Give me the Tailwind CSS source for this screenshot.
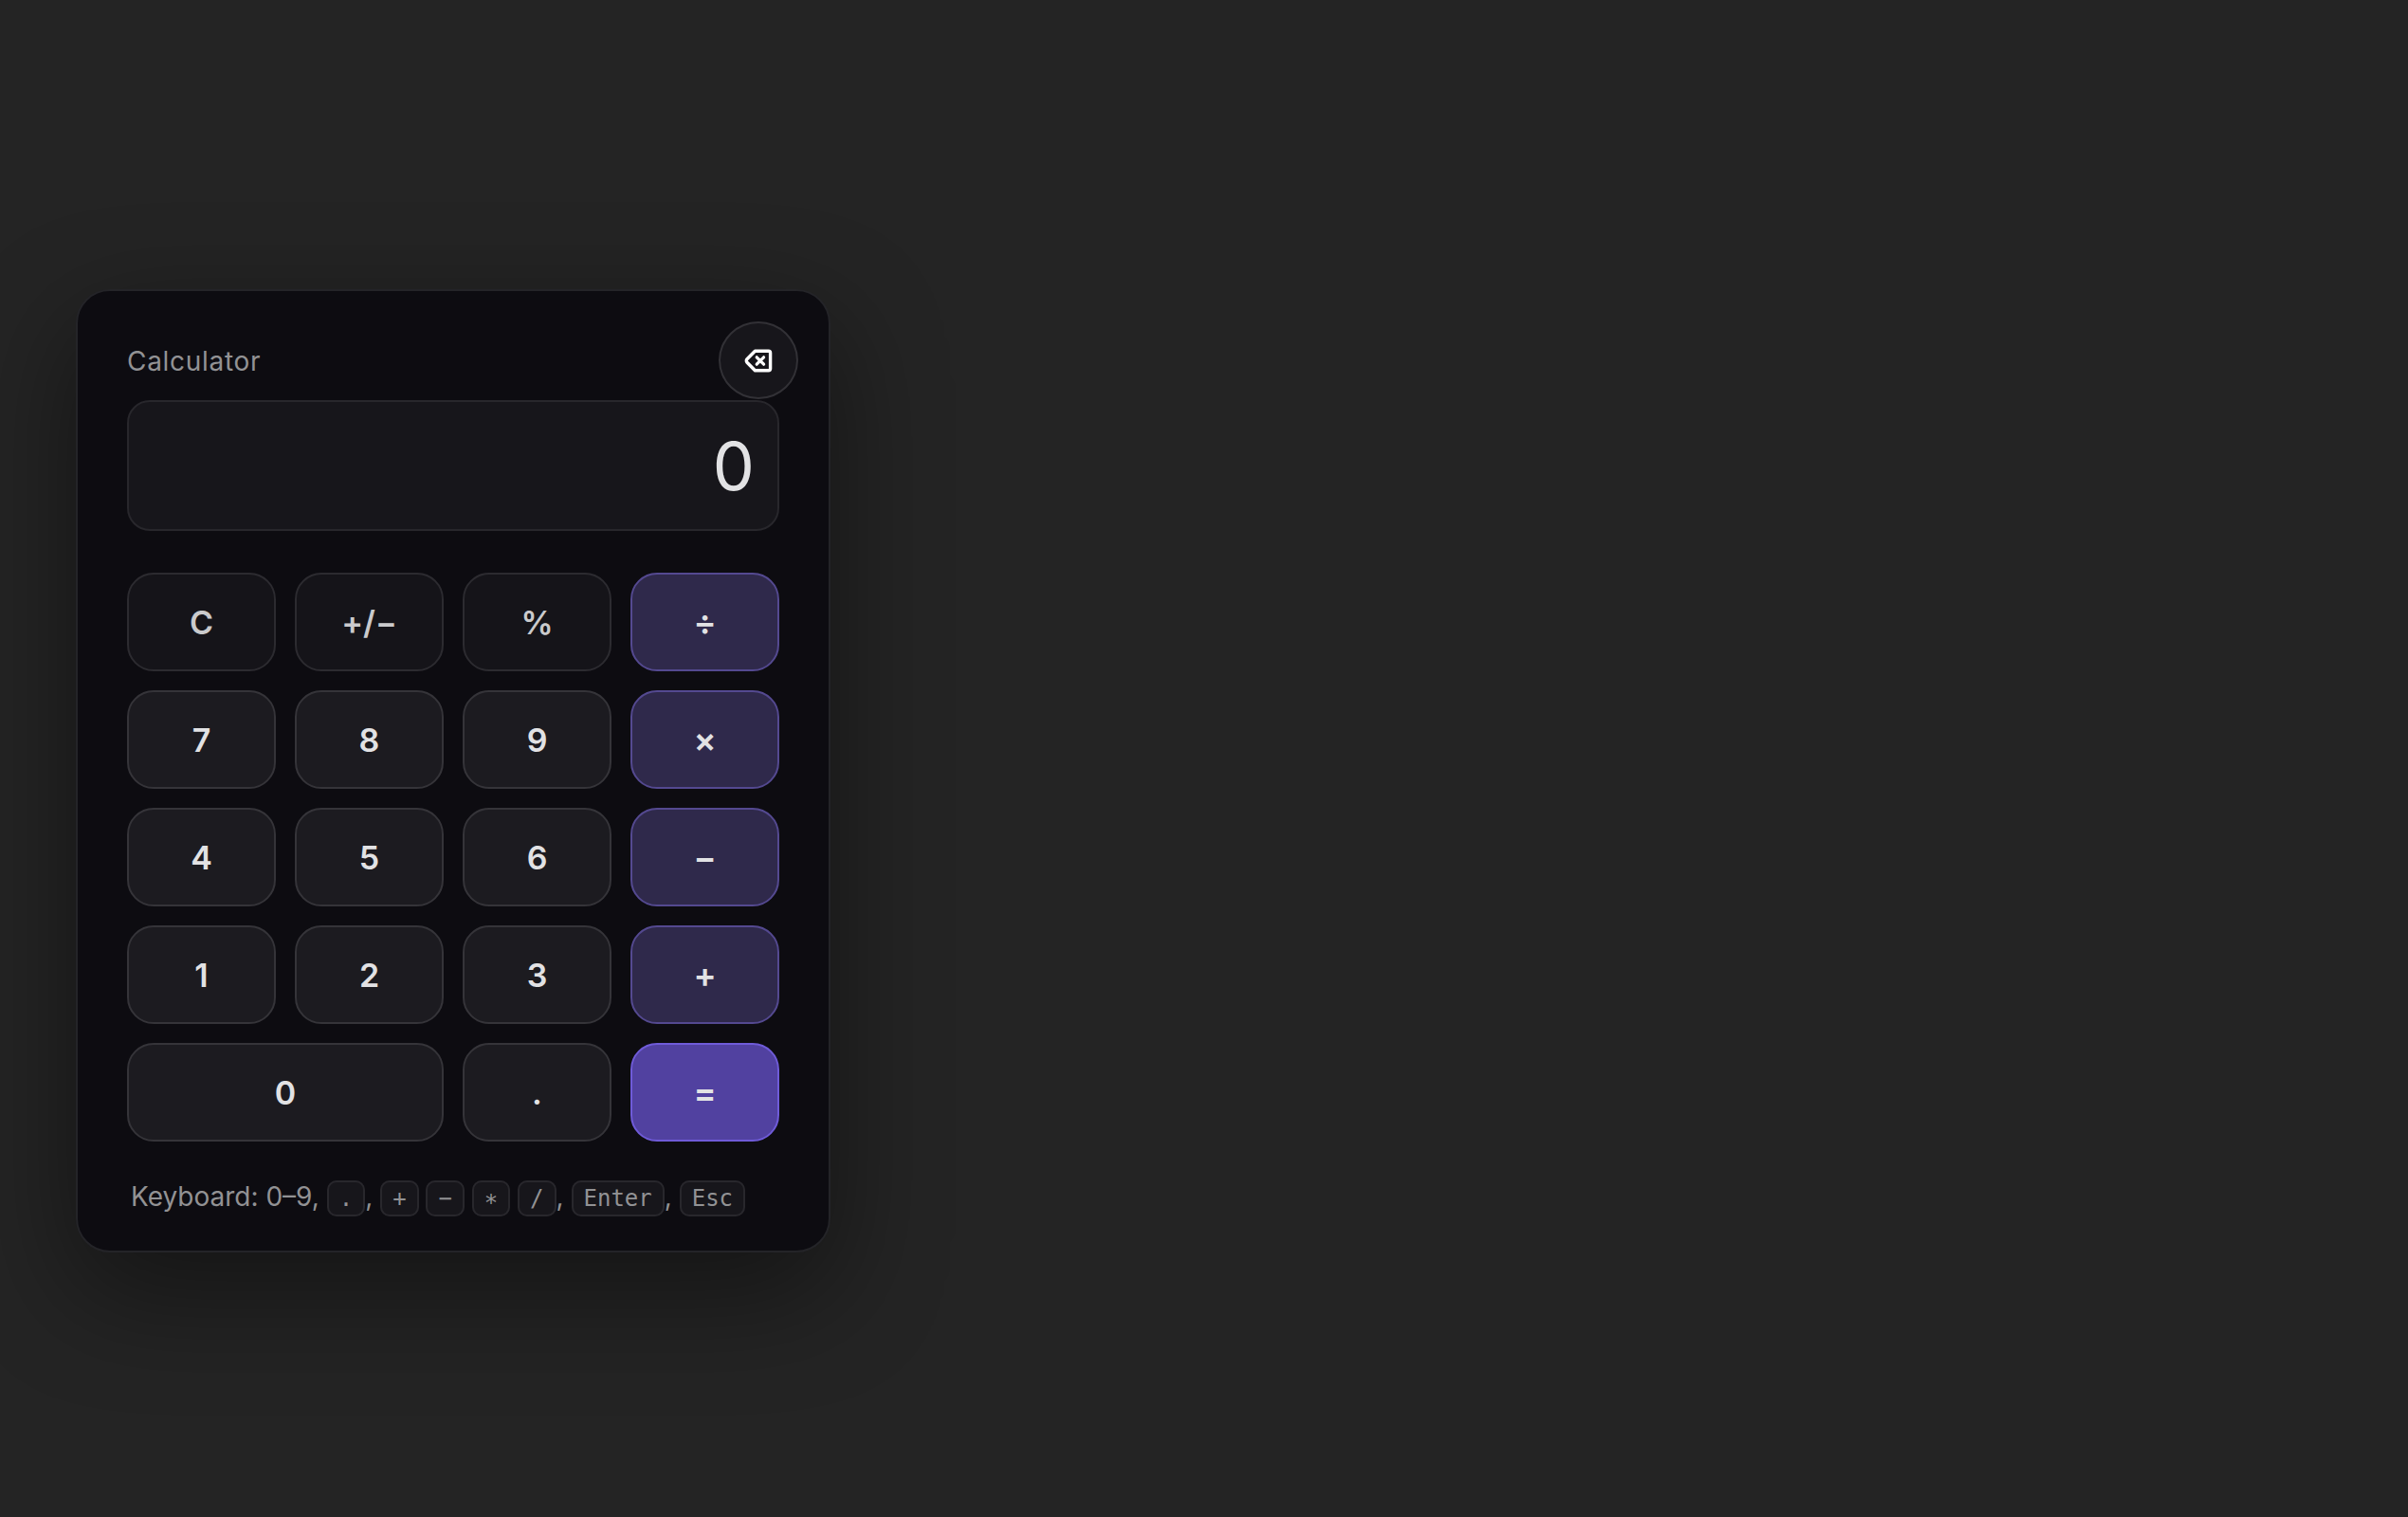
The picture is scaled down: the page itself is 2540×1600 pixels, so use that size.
<!DOCTYPE html>
<html lang="en">
<head>
    <meta charset="UTF-8">
    <meta name="viewport" content="width=device-width, initial-scale=1.0">
    <title>Calculator</title>
    <script src="https://cdn.jsdelivr.net/npm/@tailwindcss/browser@4"></script>
</head>
<body class="min-h-screen flex items-center bg-[#242424] px-20 pt-[26px] font-['Inter',sans-serif] text-[#e2e2e4]">
    <main class="relative w-full max-w-[796px] rounded-[36px] border-2 border-[#242428] bg-[#0d0c11] px-[52px] pt-[52px] pb-[34px] shadow-[0_40px_120px_rgba(0,0,0,0.45)]">
        <header>
            <h1 class="text-[28px] leading-[44px] tracking-wide text-[#929294]">Calculator</h1>
            <button type="button" aria-label="Backspace" class="absolute top-8 right-8 flex h-[82px] w-[84px] items-center justify-center rounded-[50%] border-2 border-[#323136] bg-[#17161b] text-white">
                <svg class="h-8 w-8" viewBox="0 0 32 32" fill="none" stroke="currentColor" stroke-linecap="round" stroke-linejoin="round">
                    <path stroke-width="3.4" d="M12.4 6.2h14.2a2 2 0 0 1 2 2v16.6a2 2 0 0 1-2 2H12.4L4 18.2a2.4 2.4 0 0 1 0-3.4z" />
                    <path stroke-width="3.2" d="m14.2 12.8 7.4 7.4m0-7.4-7.4 7.4" />
                </svg>
            </button>
        </header>

        <output class="mt-[19px] flex h-[138px] items-center justify-end rounded-3xl border-2 border-[#28272c] bg-[#17161b] px-6 pt-[2px] text-[70px] leading-none" aria-live="polite">0</output>

        <div class="mt-11 grid grid-cols-4 gap-5 text-[34px] font-semibold">
            <button type="button" class="h-[104px] rounded-[28px] border-2 border-[#2c2b30] bg-[#151419] text-[#cacacc]">C</button>
            <button type="button" class="h-[104px] rounded-[28px] border-2 border-[#2c2b30] bg-[#151419] text-[#cacacc]">+/−</button>
            <button type="button" class="h-[104px] rounded-[28px] border-2 border-[#2c2b30] bg-[#151419] text-[#cacacc]">%</button>
            <button type="button" class="h-[104px] rounded-[28px] border-2 border-[#544990] bg-[#2f294b] text-[36px]">÷</button>

            <button type="button" class="h-[104px] rounded-[28px] border-2 border-[#353439] bg-[#1c1b20]">7</button>
            <button type="button" class="h-[104px] rounded-[28px] border-2 border-[#353439] bg-[#1c1b20]">8</button>
            <button type="button" class="h-[104px] rounded-[28px] border-2 border-[#353439] bg-[#1c1b20]">9</button>
            <button type="button" class="h-[104px] rounded-[28px] border-2 border-[#544990] bg-[#2f294b] text-[36px]">×</button>

            <button type="button" class="h-[104px] rounded-[28px] border-2 border-[#353439] bg-[#1c1b20]">4</button>
            <button type="button" class="h-[104px] rounded-[28px] border-2 border-[#353439] bg-[#1c1b20]">5</button>
            <button type="button" class="h-[104px] rounded-[28px] border-2 border-[#353439] bg-[#1c1b20]">6</button>
            <button type="button" class="h-[104px] rounded-[28px] border-2 border-[#544990] bg-[#2f294b] text-[36px]">−</button>

            <button type="button" class="h-[104px] rounded-[28px] border-2 border-[#353439] bg-[#1c1b20]">1</button>
            <button type="button" class="h-[104px] rounded-[28px] border-2 border-[#353439] bg-[#1c1b20]">2</button>
            <button type="button" class="h-[104px] rounded-[28px] border-2 border-[#353439] bg-[#1c1b20]">3</button>
            <button type="button" class="h-[104px] rounded-[28px] border-2 border-[#544990] bg-[#2f294b] text-[36px]">+</button>

            <button type="button" class="col-span-2 h-[104px] rounded-[28px] border-2 border-[#353439] bg-[#1c1b20]">0</button>
            <button type="button" class="h-[104px] rounded-[28px] border-2 border-[#353439] bg-[#1c1b20]">.</button>
            <button type="button" class="h-[104px] rounded-[28px] border-2 border-[#6f5bd8] bg-[#5141a0] text-[36px]">=</button>
        </div>

        <p class="mt-[37px] px-1 text-[28px] leading-[42px] text-[#929294]">
            Keyboard: 0–9,
            <kbd class="rounded-[10px] border-2 border-[#28272c] bg-[#17161b] px-[11px] py-[3px] font-['DejaVu_Sans_Mono',monospace] text-[24px]">.</kbd>,
            <kbd class="rounded-[10px] border-2 border-[#28272c] bg-[#17161b] px-[11px] py-[3px] font-['DejaVu_Sans_Mono',monospace] text-[24px]">+</kbd>
            <kbd class="rounded-[10px] border-2 border-[#28272c] bg-[#17161b] px-[11px] py-[3px] font-['DejaVu_Sans_Mono',monospace] text-[24px]">−</kbd>
            <kbd class="rounded-[10px] border-2 border-[#28272c] bg-[#17161b] px-[11px] py-[3px] font-['DejaVu_Sans_Mono',monospace] text-[24px]">∗</kbd>
            <kbd class="rounded-[10px] border-2 border-[#28272c] bg-[#17161b] px-[11px] py-[3px] font-['DejaVu_Sans_Mono',monospace] text-[24px]">/</kbd>,
            <kbd class="rounded-[10px] border-2 border-[#28272c] bg-[#17161b] px-[11px] py-[3px] font-['DejaVu_Sans_Mono',monospace] text-[24px]">Enter</kbd>,
            <kbd class="rounded-[10px] border-2 border-[#28272c] bg-[#17161b] px-[11px] py-[3px] font-['DejaVu_Sans_Mono',monospace] text-[24px]">Esc</kbd>
        </p>
    </main>
</body>
</html>
